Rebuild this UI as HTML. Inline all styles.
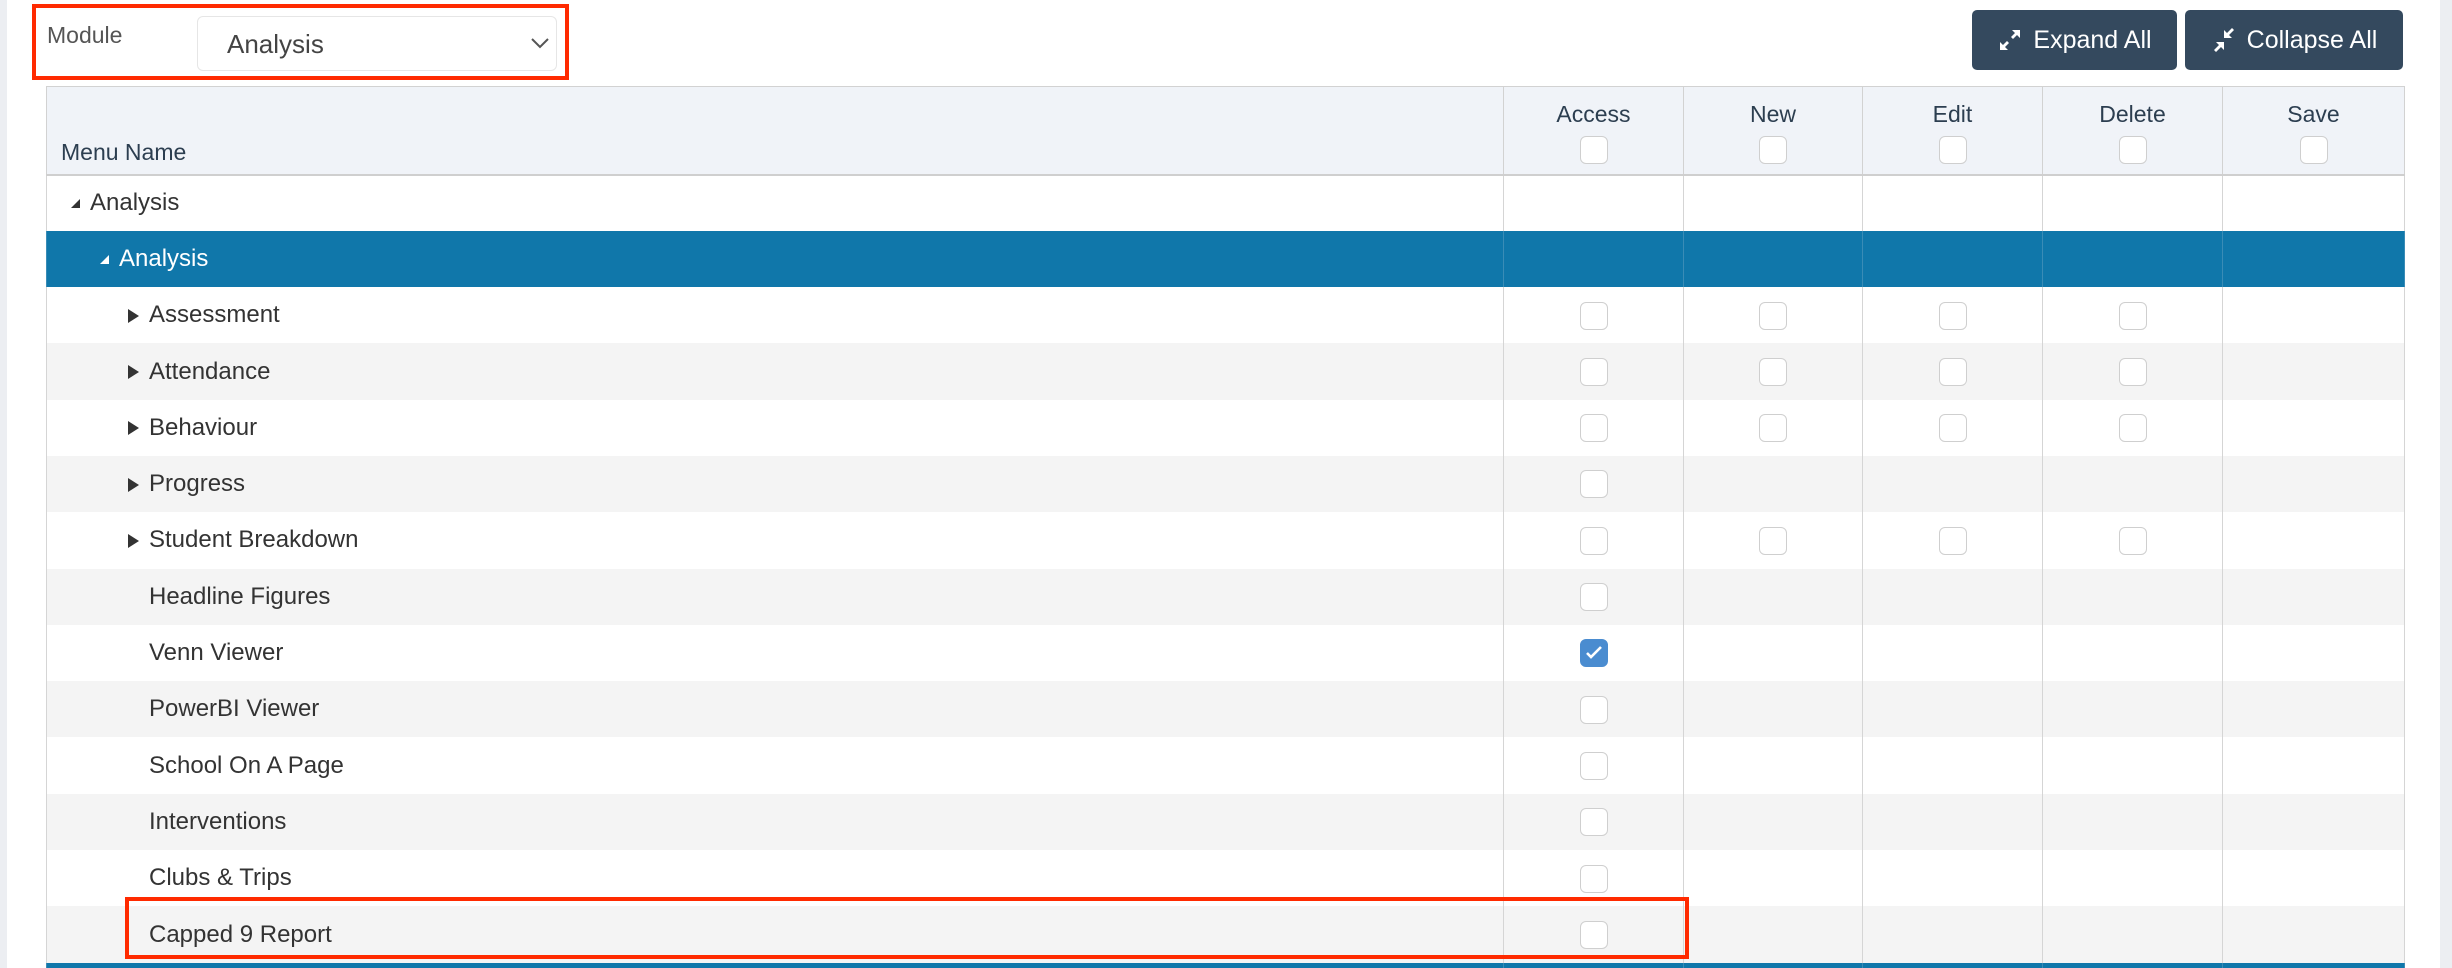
<!DOCTYPE html>
<html><head><meta charset="utf-8"><style>
*{box-sizing:border-box;margin:0;padding:0}
html,body{width:2452px;height:968px;overflow:hidden}
body{background:#fff;font-family:"Liberation Sans",Arial,sans-serif;position:relative}
.ls{position:absolute;left:0;top:0;width:7px;height:968px;background:#eceef2}
.rs{position:absolute;right:0;top:0;width:12px;height:968px;background:#eceef2}
.abs{position:absolute}
.redbox{position:absolute;border:4px solid #ff2a00}
.sel{position:absolute;left:197px;top:16px;width:360px;height:55px;border:1px solid #e6e6e6;border-radius:6px}
.btn{position:absolute;top:10px;height:60px;background:#34495e;border-radius:5px;color:#fff;font-size:25px;display:flex;align-items:center;justify-content:center;gap:10px}
table{position:absolute;left:46px;top:86px;border-collapse:collapse;width:2358px;table-layout:fixed}
th{background:#f0f3f8;height:88px;border:1px solid #d2d2d2;border-bottom:2px solid #cfcfcf;font-weight:500;color:#2c3e50;font-size:23px;vertical-align:top;padding-top:14px}
th.mn{text-align:left;vertical-align:bottom;padding:0 0 8px 14px;border-right:1px solid #d2d2d2}
td{height:56.3px;border-left:1px solid #d5d5d5;border-right:1px solid #d5d5d5;font-size:24px;color:#333;text-align:center;vertical-align:middle;padding:0}
td.n{text-align:left}
tr.g td{background:#f4f4f4}
tr.b td{background:#1077aa;color:#fff;border-color:#3a8cb6}
tr.last td{height:10px}
.cb{display:inline-block;width:28px;height:28px;border:1.5px solid #cfcfcf;border-radius:6px;background:#fff;vertical-align:middle}
.ck{background:#4a8cd0;border-color:#4a8cd0;position:relative}
.tri{display:inline-block;width:0;height:0;vertical-align:middle;margin-right:10px}
.tr{border-top:7px solid transparent;border-bottom:7px solid transparent;border-left:11px solid #333}
.td{border-left:9px solid transparent;border-bottom:9px solid #333}
</style></head><body>
<div class="ls"></div><div class="rs"></div>
<div class="redbox" style="left:32px;top:4px;width:537px;height:76px"></div>
<div class="abs" style="left:47px;top:22px;font-size:23px;color:#555">Module</div>
<div class="sel"><span class="abs" style="left:29px;top:12px;font-size:26px;color:#444">Analysis</span>
<svg class="abs" style="left:333px;top:20px" width="18" height="12" viewBox="0 0 18 12"><path d="M1 2 L9 10 L17 2" stroke="#555" stroke-width="2" fill="none"/></svg></div>
<div class="btn" style="left:1972px;width:205px"><svg width="26" height="26" viewBox="0 0 26 26"><path d="M15 3h8v8l-3-3-4 4-2-2 4-4zM11 23H3v-8l3 3 4-4 2 2-4 4z" fill="#fff"/></svg>Expand All</div>
<div class="btn" style="left:2185px;width:218px"><svg width="26" height="26" viewBox="0 0 26 26"><path d="M23 3l-5 5 3 3h-8V3l3 3 5-5zM3 23l5-5-3-3h8v8l-3-3-5 5z" fill="#fff"/></svg>Collapse All</div>
<table>
<colgroup><col style="width:1457px"><col style="width:180px"><col style="width:179px"><col style="width:180px"><col style="width:180px"><col style="width:182px"></colgroup>
<tr><th class="mn">Menu Name</th><th>Access<br><span class="cb" style="margin-top:8px"></span></th><th>New<br><span class="cb" style="margin-top:8px"></span></th><th>Edit<br><span class="cb" style="margin-top:8px"></span></th><th>Delete<br><span class="cb" style="margin-top:8px"></span></th><th>Save<br><span class="cb" style="margin-top:8px"></span></th></tr>
<tr><td class="n" style="padding-left:24px"><span class="tri td"></span>Analysis</td><td></td><td></td><td></td><td></td><td></td></tr>
<tr class="b"><td class="n" style="padding-left:53px"><span class="tri td" style="border-bottom-color:#fff"></span>Analysis</td><td></td><td></td><td></td><td></td><td></td></tr>
<tr><td class="n" style="padding-left:81px"><span class="tri tr"></span>Assessment</td><td><span class="cb"></span></td><td><span class="cb"></span></td><td><span class="cb"></span></td><td><span class="cb"></span></td><td></td></tr>
<tr class="g"><td class="n" style="padding-left:81px"><span class="tri tr"></span>Attendance</td><td><span class="cb"></span></td><td><span class="cb"></span></td><td><span class="cb"></span></td><td><span class="cb"></span></td><td></td></tr>
<tr><td class="n" style="padding-left:81px"><span class="tri tr"></span>Behaviour</td><td><span class="cb"></span></td><td><span class="cb"></span></td><td><span class="cb"></span></td><td><span class="cb"></span></td><td></td></tr>
<tr class="g"><td class="n" style="padding-left:81px"><span class="tri tr"></span>Progress</td><td><span class="cb"></span></td><td></td><td></td><td></td><td></td></tr>
<tr><td class="n" style="padding-left:81px"><span class="tri tr"></span>Student Breakdown</td><td><span class="cb"></span></td><td><span class="cb"></span></td><td><span class="cb"></span></td><td><span class="cb"></span></td><td></td></tr>
<tr class="g"><td class="n" style="padding-left:102px">Headline Figures</td><td><span class="cb"></span></td><td></td><td></td><td></td><td></td></tr>
<tr><td class="n" style="padding-left:102px">Venn Viewer</td><td><span class="cb ck"><svg style="position:absolute;left:4px;top:5px" width="18" height="15" viewBox="0 0 18 15"><path d="M2 8l4 4 10-10" stroke="#fff" stroke-width="2.6" fill="none"/></svg></span></td><td></td><td></td><td></td><td></td></tr>
<tr class="g"><td class="n" style="padding-left:102px">PowerBI Viewer</td><td><span class="cb"></span></td><td></td><td></td><td></td><td></td></tr>
<tr><td class="n" style="padding-left:102px">School On A Page</td><td><span class="cb"></span></td><td></td><td></td><td></td><td></td></tr>
<tr class="g"><td class="n" style="padding-left:102px">Interventions</td><td><span class="cb"></span></td><td></td><td></td><td></td><td></td></tr>
<tr><td class="n" style="padding-left:102px">Clubs &amp; Trips</td><td><span class="cb"></span></td><td></td><td></td><td></td><td></td></tr>
<tr class="g"><td class="n" style="padding-left:102px">Capped 9 Report</td><td><span class="cb"></span></td><td></td><td></td><td></td><td></td></tr>
<tr class="b last"><td class="n"></td><td></td><td></td><td></td><td></td><td></td></tr>
</table>
<div class="redbox" style="left:125px;top:897px;width:1564px;height:62px"></div>
</body></html>
